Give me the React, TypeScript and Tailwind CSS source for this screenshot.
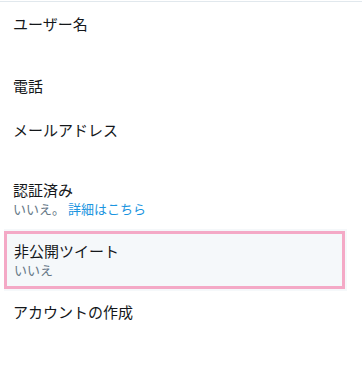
import React from "react";

const font = { fontFamily: '"Noto Sans CJK JP", "Noto Sans", sans-serif' };

export default function App() {
  return (
    <div
      className="w-[362px] h-[369px] bg-white text-[#14171a] overflow-hidden"
      style={font}
    >
      <div className="mt-[1px] h-[1px] bg-[#e1e8ed]" />
      <div className="mt-[12px] pl-[13px] text-[15px] leading-[20px]">ユーザー名</div>
      <div className="mt-[42px] pl-[13px] text-[15px] leading-[20px]">電話</div>
      <div className="mt-[24px] pl-[13px] text-[15px] leading-[20px]">メールアドレス</div>
      <div className="mt-[40px] pl-[13px]">
        <div className="text-[15px] leading-[20px]">認証済み</div>
        <div className="text-[13px] leading-[18px] text-[#657786]">
          いいえ。 <span className="text-[#1b95e0]">詳細はこちら</span>
        </div>
      </div>
      <div className="mt-[11px] ml-[4px] w-[343px] bg-[#f5f8fa] py-[2px]">
        <div className="w-[341px] border-[3px] border-[#f4a9c6] pl-[7px] py-[7px]">
          <div className="text-[15px] leading-[20px]">非公開ツイート</div>
          <div className="text-[13px] leading-[18px] text-[#657786]">いいえ</div>
        </div>
      </div>
      <div className="mt-[11px] pl-[13px] text-[15px] leading-[20px]">アカウントの作成</div>
    </div>
  );
}
